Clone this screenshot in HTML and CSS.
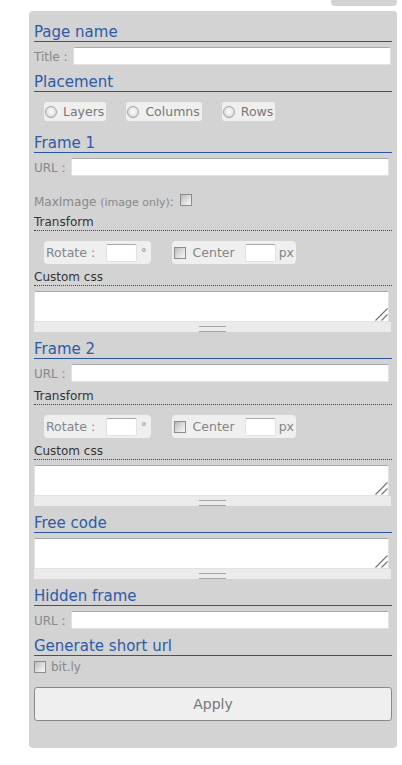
FILE: index.html
```html
<!DOCTYPE html>
<html lang="en">
<head>
<meta charset="utf-8">
<title>Page settings</title>
<link rel="stylesheet" href="styles.css">
</head>
<body>
<div class="tab"></div>
<form class="panel">
  <h2 class="section">Page name</h2>
  <div class="field-row">
    <label class="lbl">Title :</label>
    <input class="text wide" type="text">
  </div>

  <h2 class="section">Placement</h2>
  <div class="radios">
    <label class="opt"><input type="radio" name="place"><span>Layers</span></label>
    <label class="opt"><input type="radio" name="place"><span>Columns</span></label>
    <label class="opt"><input type="radio" name="place"><span>Rows</span></label>
  </div>

  <h2 class="section sec-frame1">Frame 1</h2>
  <div class="field-row">
    <label class="lbl">URL :</label>
    <input class="text url" type="text">
  </div>
  <div class="maximage">
    <span class="lbl">MaxImage <small>(image only)</small>:</span>
    <input class="check" type="checkbox">
  </div>
  <div class="sub">Transform</div>
  <div class="transform">
    <div class="pill rotate">
      <span>Rotate :</span>
      <input class="text small" type="text">
      <span class="deg">°</span>
    </div>
    <div class="pill center">
      <input class="check" type="checkbox">
      <span>Center</span>
      <input class="text small" type="text">
      <span>px</span>
    </div>
  </div>
  <div class="sub">Custom css</div>
  <div class="area">
    <div class="area-box">
      <textarea></textarea>
      <svg class="resizer" width="14" height="14" viewBox="0 0 14 14"><path d="M1.5 13.5 L13.5 1.5 M7.5 13.5 L13.5 7.5" stroke="#6f6f6f" stroke-width="1.1" fill="none"/></svg>
    </div>
    <div class="grip"></div>
  </div>

  <h2 class="section">Frame 2</h2>
  <div class="field-row">
    <label class="lbl">URL :</label>
    <input class="text url" type="text">
  </div>
  <div class="sub">Transform</div>
  <div class="transform">
    <div class="pill rotate">
      <span>Rotate :</span>
      <input class="text small" type="text">
      <span class="deg">°</span>
    </div>
    <div class="pill center">
      <input class="check" type="checkbox">
      <span>Center</span>
      <input class="text small" type="text">
      <span>px</span>
    </div>
  </div>
  <div class="sub">Custom css</div>
  <div class="area">
    <div class="area-box">
      <textarea></textarea>
      <svg class="resizer" width="14" height="14" viewBox="0 0 14 14"><path d="M1.5 13.5 L13.5 1.5 M7.5 13.5 L13.5 7.5" stroke="#6f6f6f" stroke-width="1.1" fill="none"/></svg>
    </div>
    <div class="grip"></div>
  </div>

  <h2 class="section">Free code</h2>
  <div class="area">
    <div class="area-box">
      <textarea></textarea>
      <svg class="resizer" width="14" height="14" viewBox="0 0 14 14"><path d="M1.5 13.5 L13.5 1.5 M7.5 13.5 L13.5 7.5" stroke="#6f6f6f" stroke-width="1.1" fill="none"/></svg>
    </div>
    <div class="grip"></div>
  </div>

  <h2 class="section">Hidden frame</h2>
  <div class="field-row">
    <label class="lbl">URL :</label>
    <input class="text url" type="text">
  </div>

  <h2 class="section">Generate short url</h2>
  <label class="short">
    <input class="check" type="checkbox">
    <span>bit.ly</span>
  </label>

  <button class="apply" type="button">Apply</button>
</form>
</body>
</html>
```
FILE: styles.css
```css
* {
  box-sizing: border-box;
}

body {
  margin: 0;
  background: #fff;
  font-family: "DejaVu Sans", Verdana, sans-serif;
  color: #333;
}

/* small tab hanging from the top edge */
.tab {
  margin-left: 331px;
  width: 66px;
  height: 6px;
  background: #d3d3d3;
  border-radius: 0 0 4px 4px;
}

.panel {
  margin: 5px 0 0 29px;
  width: 368px;
  padding: 12px 5px 27px 5px;
  background: #d3d3d3;
  border-radius: 4px;
}

/* blue section headings */
.section {
  margin: 8px 0 0;
  font-size: 15px;
  line-height: 18px;
  font-weight: normal;
  color: #2e5aa6;
  border-bottom: 1px solid #2c55a0;
}

.section:first-child {
  margin-top: 0;
}

.sec-frame1 {
  margin-top: 13px;
}

.lbl {
  font-size: 12px;
  color: #888;
  white-space: nowrap;
}

.lbl small {
  font-size: 11px;
}

.field-row {
  display: flex;
  align-items: center;
  margin-top: 5px;
  height: 18px;
}

.field-row .lbl {
  margin-right: 5px;
  padding-top: 2px;
}

.text {
  height: 18px;
  margin: 0;
  padding: 0 3px;
  background: #fff;
  border: 1px solid #e2e2e2;
  border-top-color: #a8a8a8;
  border-radius: 2px;
  font: 12px "DejaVu Sans", sans-serif;
  outline: none;
}

.wide {
  flex: 1;
  margin-right: 1px;
}

.url {
  flex: 1;
  margin-right: 3px;
}

/* placement choices */
.radios {
  display: flex;
  gap: 20px;
  margin-top: 10px;
  padding-left: 10px;
}

.opt {
  display: inline-flex;
  align-items: center;
  height: 19px;
  padding: 0 2px 0 1px;
  background: #efefef;
  border-radius: 3px;
  font-size: 12.5px;
  color: #777;
}

.opt input {
  appearance: none;
  -webkit-appearance: none;
  width: 12px;
  height: 12px;
  margin: 0 6px 0 0;
  border: 1px solid #a3a3a3;
  border-radius: 50%;
  background: radial-gradient(circle at 50% 45%, #fcfcfc 0, #ebebeb 45%, #c4c4c4 100%);
}

.check {
  appearance: none;
  -webkit-appearance: none;
  width: 12px;
  height: 12px;
  margin: 0;
  border: 1px solid #8c8c8c;
  background: linear-gradient(135deg, #b9b9b9 0%, #dcdcdc 50%, #f7f7f7 100%);
}

.maximage {
  display: flex;
  align-items: center;
  height: 18px;
  margin-top: 15px;
}

.maximage .lbl {
  padding-top: 3px;
}

.maximage .check {
  margin-left: 6px;
}

/* dotted sub-headings */
.sub {
  margin-top: 6px;
  font-size: 12px;
  line-height: 15px;
  color: #333;
  border-bottom: 1px dotted #444;
}

.field-row + .sub {
  margin-top: 7px;
}

.transform {
  display: flex;
  gap: 21px;
  margin-top: 10px;
  padding-left: 10px;
}

.pill {
  display: inline-flex;
  align-items: center;
  height: 23px;
  padding: 0 2px;
  background: #efefef;
  border-radius: 4px;
  font-size: 12.5px;
  color: #858585;
}

.rotate {
  padding-right: 4px;
}

.rotate .small {
  margin-left: 11px;
}

.deg {
  margin-left: 4px;
  font-size: 11px;
}

.center .check {
  margin-right: 7px;
}

.center .small {
  margin-left: 10px;
  margin-right: 3px;
}

.small {
  width: 31px;
}

/* text areas with their handle strip */
.area {
  margin-top: 5px;
}

.area-box {
  position: relative;
  width: calc(100% - 3px);
}

.area textarea {
  display: block;
  width: 100%;
  height: 31px;
  margin: 0;
  padding: 2px;
  border: 1px solid #e2e2e2;
  border-top-color: #a8a8a8;
  border-radius: 2px;
  background: #fff;
  resize: none;
  font: 12px "DejaVu Sans", sans-serif;
  outline: none;
}

.resizer {
  position: absolute;
  right: 1px;
  bottom: 1px;
}

.grip {
  height: 10px;
  width: calc(100% - 1px);
  padding-top: 4px;
  background: #ebebeb;
  display: flex;
  justify-content: center;
  align-items: flex-start;
}

.grip::before {
  content: "";
  width: 27px;
  height: 4px;
  border-top: 1px solid #a5a5a5;
  border-bottom: 1px solid #a5a5a5;
}

.short {
  display: flex;
  align-items: center;
  height: 18px;
  margin-top: 2px;
  font-size: 12px;
  color: #888;
}

.short .check {
  margin-right: 5px;
}

.apply {
  display: block;
  width: 100%;
  height: 34px;
  margin-top: 11px;
  background: #efefef;
  border: 1px solid #8a8a8a;
  border-radius: 3px;
  font: 14px "DejaVu Sans", sans-serif;
  color: #777;
}
```
